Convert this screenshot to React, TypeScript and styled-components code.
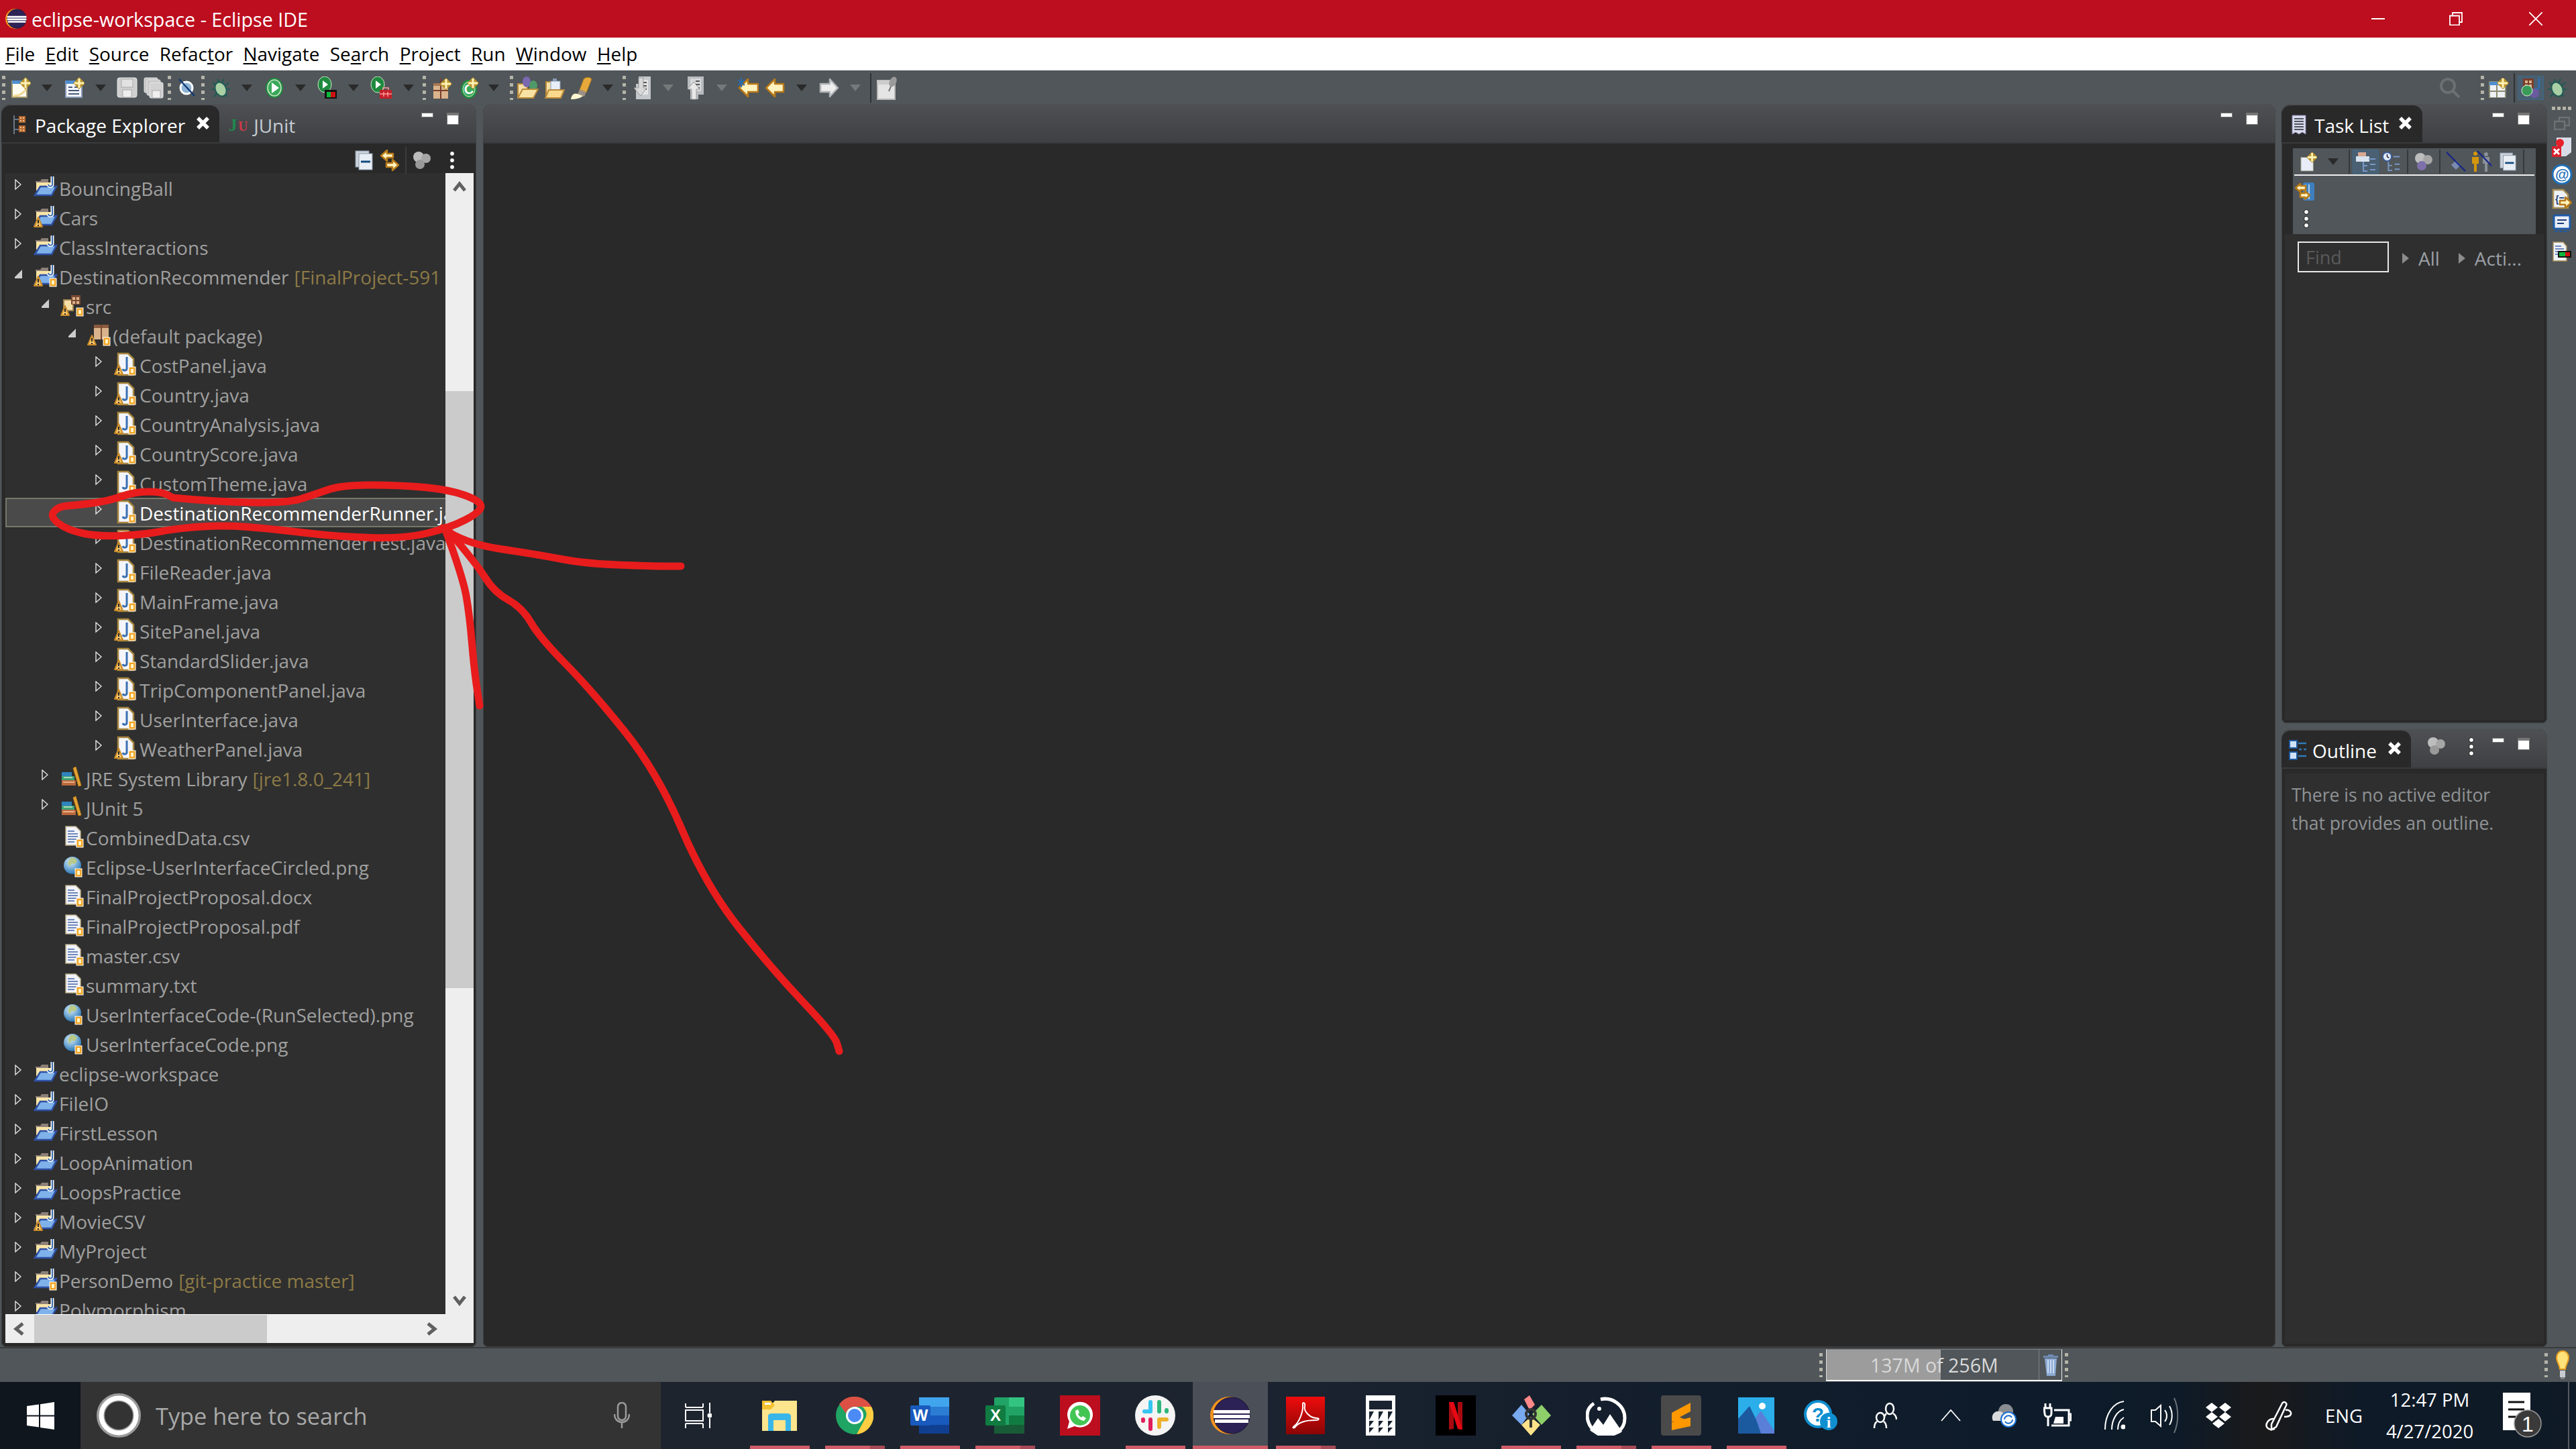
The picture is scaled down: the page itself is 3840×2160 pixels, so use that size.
import React from "react";
import styled, { createGlobalStyle } from "styled-components";

const Global = createGlobalStyle`
  html, body { margin: 0; padding: 0; background: #505659; }
  #root { width: 3840px; height: 2160px; }
  * { box-sizing: border-box; }
`;

const FONT = `"Open Sans", "Noto Sans", "Liberation Sans", sans-serif`;

const App0 = styled.div`
  position: relative; width: 3840px; height: 2160px; overflow: hidden;
  display: flex; flex-direction: column; background: #505659;
  font-family: ${FONT}; font-size: 28px;
`;
const TitleBar = styled.div`
  height: 56px; background: #bc0e1e; color: #fff; display: flex; align-items: center;
  padding-left: 8px; font-size: 28.7px;
`;
const TitleText = styled.span`margin-left: 7px; white-space: nowrap;`;
const WinButtons = styled.div`margin-left: auto; display: flex; align-items: center;`;
const WinBtn = styled.span<{ $w: number }>`width: ${p => p.$w}px; display: flex; justify-content: center;`;
const MenuBar = styled.div`
  height: 49px; background: #fff; color: #000; display: flex; align-items: center;
  padding-left: 8px; gap: 15.5px; font-size: 27.9px; border-bottom: 1px solid #eee;
`;
const Mn = styled.u`text-underline-offset: 3px; text-decoration-thickness: 2px;`;
const ToolBar = styled.div`height: 50px; display: flex; align-items: center; padding-top: 2px; position: relative;`;
const ToolCell = styled.span<{ $ml: number; $w: number }>`
  margin-left: ${p => p.$ml}px; width: ${p => p.$w}px; flex: none;
  display: flex; align-items: center; justify-content: center;
`;
const Grip = styled.span`
  display: block; width: 5px; height: 36px; flex: none;
  background: repeating-linear-gradient(180deg, #b4b4a8 0 5px, transparent 5px 11px);
`;
const Arrow = styled.span<{ $dim?: boolean }>`
  display: block; width: 0; height: 0;
  border-left: 8.5px solid transparent; border-right: 8.5px solid transparent;
  border-top: 10px solid ${p => (p.$dim ? "#75797c" : "#2a2a2a")};
`;
const VSep = styled.span`display: block; width: 2px; height: 44px; background: #2f3234;`;
const ToolRight = styled.div`margin-left: auto; display: flex; align-items: center; height: 100%;`;
const PerspBox = styled.span`
  width: 39px; height: 36px; background: #4a5f70; border: 1px solid #3b6a8c;
  display: flex; align-items: center; justify-content: center; margin-left: 4px;
`;
const Main = styled.div`height: 1853px; display: flex; padding-left: 2px;`;
const Panel = styled.div<{ $w: number; $h?: number }>`
  width: ${p => p.$w}px; flex: none; height: ${p => (p.$h ? `${p.$h}px` : "100%")}; display: flex; flex-direction: column;
  border-radius: 14px 14px 8px 8px; overflow: hidden; background: #292929;
  box-shadow: inset 0 0 0 1px #3d3f41;
`;
const Gutter = styled.div<{ $w: number }>`width: ${p => p.$w}px; flex: none;`;
const RightCol = styled.div`width: 396px; flex: none; display: flex; flex-direction: column; gap: 9px;`;
const TabRow = styled.div`
  height: 59px; flex: none; display: flex; padding-right: 26px;
  background: linear-gradient(180deg, #4e5053, #3f4043); border-bottom: 2px solid #383a3c;
`;
const Tab = styled.div<{ $active?: boolean; $pl: number; $pr: number }>`
  display: flex; align-items: center; margin-top: 2px; padding: 5px ${p => p.$pr}px 0 ${p => p.$pl}px;
  white-space: nowrap; border-radius: 14px 14px 0 0;
  background: ${p => (p.$active ? "#292929" : "transparent")};
  color: ${p => (p.$active ? "#fff" : "#c4ccd4")};
`;
const TabIcon = styled.span<{ $w: number }>`width: ${p => p.$w}px; margin-right: 7px; display: flex; flex: none; margin-top: -2px;`;
const TabClose = styled.span<{ $ml: number }>`margin-left: ${p => p.$ml}px; display: flex; margin-top: -8px;`;
const Controls = styled.div`margin-left: auto; display: flex; align-items: flex-start; gap: 20px; padding-top: 13px;`;
const MinBtn = styled.span`display: block; width: 18px; height: 7px; background: #fff; border: 1px solid #777;`;
const MaxBtn = styled.span`display: block; width: 18px; height: 18px; background: #fff; border: 1px solid #777; border-top-width: 3px; box-shadow: inset 0 1px 0 #777;`;
const ExtraCtl = styled.span<{ $mr: number }>`display: flex; margin-right: ${p => p.$mr}px; margin-top: -2px;`;

const ViewBar = styled.div`height: 44px; flex: none; display: flex; align-items: center; position: relative; padding-top: 6px;`;
const ViewCell = styled.span<{ $ml: number }>`margin-left: ${p => p.$ml}px; display: flex; align-items: center;`;
const TreeGrid = styled.div`
  flex: 1; min-height: 0; margin: 0 4px 5px 6px; display: grid;
  grid-template-columns: 656px 42px; grid-template-rows: 1701px 43px;
`;
const Tree = styled.div`background: #2f2f2f; overflow: hidden; display: flex; flex-direction: column;`;
const Row = styled.div<{ $depth: number; $sel?: boolean }>`
  height: 44px; flex: none; display: flex; align-items: center; white-space: nowrap;
  padding-left: ${p => 14 + p.$depth * 40}px;
  color: ${p => (p.$sel ? "#fff" : "#a0a0a0")};
  background: ${p => (p.$sel ? "#4a4a4a" : "transparent")};
  box-shadow: ${p => (p.$sel ? "inset 0 2px 0 #77776a, inset 0 -2px 0 #77776a, inset 2px 0 0 #77776a" : "none")};
`;
const Twisty = styled.span`width: 28px; flex: none; display: flex; margin-top: -8px;`;
const RowIcon = styled.span`width: 38px; height: 38px; flex: none; display: flex;`;
const RowText = styled.span`margin-top: 1px;`;
const Deco = styled.span`color: #8c7a46; margin-left: 8px;`;
const VScroll = styled.div`background: #eee; display: flex; flex-direction: column; align-items: center;`;
const HScroll = styled.div`background: #eee; display: flex; align-items: center; border-top: 1px solid #fff;`;
const Corner = styled.div`background: #eee;`;
const ScrollBtn = styled.span`width: 42px; height: 42px; flex: none; display: flex; align-items: center; justify-content: center;`;
const VThumb = styled.div`width: 100%; height: 890px; margin-top: 283px; background: #cbcbcb; margin-bottom: auto;`;
const HThumb = styled.div`width: 347px; height: 100%; background: #cbcbcb; margin-left: 1px; margin-right: auto;`;

const EditorBody = styled.div`flex: 1;`;
const TaskTools = styled.div`
  margin: 7px 0 0 17px; width: 362px; height: 128px; background: #505659; flex: none;
  display: flex; flex-direction: column;
`;
const TaskRow1 = styled.div`
  height: 41px; margin: 0 2px; border-bottom: 2px solid #f0f0f0; display: flex; align-items: center;
`;
const TaskRow2 = styled.div`display: flex; flex-direction: column; padding: 9px 0 0 3px; gap: 10px;`;
const SelectedTool = styled.span`
  width: 39px; height: 36px; margin-left: 4px; background: #4a6072; border: 1px solid #3b6a8c;
  display: flex; align-items: center; justify-content: center;
`;
const ThinSep = styled.span<{ $ml: number }>`display: block; width: 2px; height: 36px; background: #36393b; margin-left: ${p => p.$ml}px;`;
const DotsWrap = styled.span`display: flex; margin-left: 12px;`;
const Content = styled.div<{ $mt?: number }>`flex: 1; margin: ${p => p.$mt ?? 0}px 5px 5px; background: #2f2f2f;`;
const FindRow = styled.div`display: flex; align-items: center; padding: 11px 0 0 19px;`;
const FindBox = styled.div`
  width: 136px; height: 46px; border: 2px solid #e8e8e8; color: #5a5a5a; padding-left: 10px;
  display: flex; align-items: center; font-size: 27px;
`;
const FindLink = styled.span<{ $ml: number }>`margin-left: ${p => p.$ml}px; color: #9ba0a6; font-size: 28px; display: flex; align-items: center; gap: 14px; margin-top: 3px;`;
const Message = styled.div`padding: 11px 0 0 10px; color: #8f9396; font-size: 26.5px; line-height: 42px;`;

const Trim = styled.div`width: 43px; flex: none; display: flex; flex-direction: column; align-items: center; padding-top: 4px;`;
const TrimIcon = styled.span<{ $mt: number }>`display: flex; margin-top: ${p => p.$mt}px;`;
const TrimGrip = styled.span`
  display: block; width: 30px; height: 5px;
  background: repeating-linear-gradient(90deg, #b4b4a8 0 5px, transparent 5px 8px);
`;

const StatusBar = styled.div`height: 52px; display: flex; align-items: center; position: relative; border-top: 2px solid #3a3a3a;`;
const Heap = styled.div`
  width: 352px; height: 48px; margin-left: 5px; display: flex; position: relative;
  border: 1px solid #7b8083; border-bottom: 2px solid #fff; border-left-color: #ddd; border-right-color: #eee;
  color: #d9d9d9; font-size: 28.5px;
`;
const HeapFill = styled.div`width: 170px; background: #9c9c9c; flex: none;`;
const HeapText = styled.span`position: absolute; left: 65px; top: 50%; transform: translateY(-50%); white-space: nowrap;`;
const HeapTrash = styled.span`
  margin-left: auto; width: 34px; border-left: 1px solid #7b8083; display: flex; align-items: center; justify-content: center;
`;

const Taskbar = styled.div`
  height: 100px; flex: none; display: flex; align-items: stretch; color: #fff;
  background: linear-gradient(90deg, #1e252e 0, #1e242e 1000px, #1c2430 1800px, #141e2c 2400px, #0d1b2a 3100px, #0e1a27 3250px, #1a1a1b 3375px, #0e1a28 3520px, #0f1a26 100%);
`;
const StartBtn = styled.div`width: 120px; background: #0f161d; display: flex; align-items: center; justify-content: center;`;
const SearchBox = styled.div`width: 865px; background: #333; display: flex; align-items: center; padding-left: 24px; position: relative;`;
const SearchText = styled.span`margin-left: 22px; color: #a8a8a8; font-size: 34.300px; white-space: nowrap;`;
const Mic = styled.span`margin-left: auto; margin-right: 46px; display: flex;`;
const TaskView = styled.div`width: 121px; display: flex; align-items: center; justify-content: center; padding-right: 10px;`;
const TaskItem = styled.div<{ $active?: boolean }>`
  width: 112px; flex: none; position: relative; display: flex; align-items: center; justify-content: center;
  background: ${p => (p.$active ? "#4a4f58" : "transparent")};
`;
const Underline = styled.span<{ $full?: boolean; $split?: boolean }>`
  position: absolute; bottom: 0; height: 5px;
  left: ${p => (p.$full ? 0 : 12)}px; right: ${p => (p.$full ? 0 : 11)}px;
  background: ${p => (p.$split ? "linear-gradient(90deg, #cf5c66 0 67px, #a64a55 67px)" : "#cf5c66")};
`;
const TrayItem = styled.div<{ $w: number }>`
  width: ${p => p.$w}px; flex: none; display: flex; align-items: center; justify-content: center; font-size: 27.5px;
`;
const Clock = styled.div`
  width: 148px; flex: none; display: flex; flex-direction: column; align-items: center; justify-content: center;
  gap: 11px; font-size: 27.5px; line-height: 36px; white-space: nowrap;
`;
const Edge = styled.div`width: 2px; margin-left: 4px; background: #555a60;`;
const Annotation = styled.svg`position: absolute; left: 0; top: 0; pointer-events: none;`;

/* ---------- small drawings ---------- */
const Ic = ({ w = 36, h = 36, children }: { w?: number; h?: number; children: React.ReactNode }) => (
  <svg width={w} height={h} viewBox={`0 0 ${w} ${h}`}>{children}</svg>
);
const Sparkle = ({ x, y }: { x: number; y: number }) => (
  <g transform={`translate(${x} ${y})`}>
    <path d="M0-9 9 0 0 9-9 0Z" fill="#b8932a" />
    <path d="M0-7V7M-7 0H7" stroke="#fff2b8" strokeWidth="3" />
  </g>
);
const Warn = () => (
  <g>
    <path d="M7 19 13 33H1Z" fill="#f7c568" stroke="#c98a28" strokeWidth="2" strokeLinejoin="round" />
    <path d="M7 23v5M7 30v2" stroke="#2b2b2b" strokeWidth="2" />
  </g>
);
const Lock = ({ x = 24 }: { x?: number }) => (
  <g transform={`translate(${x} 22)`}>
    <rect x="0" y="0" width="10" height="12" fill="#f2a525" stroke="#fff" strokeWidth="1" />
    <rect x="3" y="3" width="4" height="6" fill="#fff4c8" />
  </g>
);
const ProjectIc = ({ warn, lock }: { warn?: boolean; lock?: boolean }) => (
  <Ic>
    <path d="M3 9h7l2-3h10v5H3z" fill="#8d8078" />
    <path d="M4 11h24v12H4z" fill="#fbe5a6" />
    <path d="M2 30 10 17h24l-7 13z" fill="#7fb2ea" stroke="#2f51a6" strokeWidth="2.5" />
    <path d="M28 2v12c0 3-5 4-6 0" fill="none" stroke="#fff" strokeWidth="5" />
    <path d="M28 2v12c0 3-5 4-6 0" fill="none" stroke="#3d6fae" strokeWidth="2" />
    {warn && <Warn />}
    {lock && <Lock />}
  </Ic>
);
const SrcIc = () => (
  <Ic>
    <path d="M5 10h14v16H5z" fill="#f5dfa6" stroke="#a08450" strokeWidth="2" />
    <path d="M16 3h14v14H16z" fill="#7a4a32" />
    <path d="M18 6h4v4h-4zM24 6h4v4h-4zM18 12h4v4h-4zM24 12h4v4h-4z" fill="#d9b48c" />
    <Warn /><Lock />
  </Ic>
);
const PkgIc = () => (
  <Ic>
    <path d="M10 3h22v22H10z" fill="#d9b48c" />
    <path d="M10 3h22v5H10z" fill="#8a5a3c" />
    <path d="M20 3h2v22h-2z" fill="#7a4a32" />
    <Warn /><Lock />
  </Ic>
);
const JavaIc = ({ warn }: { warn?: boolean }) => (
  <Ic>
    <path d="M6 2h15l8 8v24H6z" fill="#f3f5fb" stroke="#a8873f" strokeWidth="2.5" />
    <path d="M19 7v17c0 4-5 4-6 1" fill="none" stroke="#3a6fb0" strokeWidth="3" />
    {warn && <Warn />}
    <Lock x={22} />
  </Ic>
);
const LibIc = () => (
  <Ic>
    <path d="M2 10h15v6H2z" fill="#2e83bd" />
    <path d="M2 16h19v6H2z" fill="#3fa377" />
    <path d="M5 18h13" stroke="#a8d8bc" strokeWidth="2" />
    <path d="M2 22h21v8H2z" fill="#b9683c" />
    <path d="M4 25h17" stroke="#e9b08a" strokeWidth="2" />
    <path d="M19 4 23 2 31 30 27 31z" fill="#e4a334" stroke="#b87a18" strokeWidth="1" />
  </Ic>
);
const TextIc = () => (
  <Ic>
    <path d="M8 3h15l7 7v21H8z" fill="#f2f4fa" stroke="#bcae8a" strokeWidth="1.5" />
    <path d="M11 10h10M11 14h15M11 18h15M11 22h13M11 26h10" stroke="#6f88bc" strokeWidth="2" />
    <Lock x={24} />
  </Ic>
);
const GlobeIc = () => (
  <Ic>
    <defs>
      <radialGradient id="gb" cx="40%" cy="30%" r="75%"><stop offset="0" stopColor="#d9efff" /><stop offset="1" stopColor="#1f6fb0" /></radialGradient>
    </defs>
    <circle cx="18" cy="17" r="13" fill="url(#gb)" />
    <path d="M15 6c5-1 9 1 10 5l-4 4-4-1-3 5-3-6z" fill="#b8c98a" />
    <Lock x={22} />
  </Ic>
);
const TwistOpen = () => <svg width="14" height="18" viewBox="0 0 14 18"><path d="M13 3V16H0Z" fill="#ccc" transform="translate(-2 0)" /></svg>;
const TwistClosed = () => <svg width="10" height="18" viewBox="0 0 10 18"><path d="M1 1 9 8 1 15Z" fill="none" stroke="#e4e4e4" strokeWidth="1.4" /></svg>;
const CloseX = () => <svg width="19" height="19" viewBox="0 0 19 19"><path d="M2 2 17 17M17 2 2 17" stroke="#fff" strokeWidth="5.5" /></svg>;
const Dots = () => (
  <svg width="10" height="30" viewBox="0 0 10 30">
    {[5, 15, 25].map(y => <circle key={y} cx="5" cy={y} r="3.5" fill="#fff" stroke="#111" />)}
  </svg>
);
const FilterIc = ({ purple }: { purple?: boolean }) => (
  <Ic w={28} h={28}>
    <circle cx="9" cy="9" r="8" fill="#bdbdbd" /><circle cx="20" cy="11" r="7" fill="#a6a6a6" />
    <circle cx="11" cy="20" r="7" fill={purple ? "#7e70aa" : "#999"} />
  </Ic>
);
const CollapseIc = () => (
  <Ic w={28} h={30}>
    <rect x="1" y="1" width="20" height="24" fill="#cdd3dc" stroke="#8a97a8" />
    <rect x="6" y="5" width="20" height="24" fill="#e9eef5" stroke="#8a97a8" />
    <path d="M9 17h14" stroke="#124a80" strokeWidth="3" />
  </Ic>
);
const YArrow = ({ d, c = "#fff3c0", s = "#b87a18" }: { d: string; c?: string; s?: string }) => (
  <path d={d} fill={c} stroke={s} strokeWidth="2.5" strokeLinejoin="round" />
);

const toolIcons: Record<string, React.ReactNode> = {
  newfile: <Ic w={30} h={32}><path d="M2 6h22v24H2z" fill="#fdfbf0" stroke="#a89868" strokeWidth="2" /><path d="M2 5h20v5H2z" fill="#4f8fd0" /><path d="M4 28c10 0 18-6 20-14" fill="none" stroke="#f0d890" strokeWidth="3" /><Sparkle x={22} y={9} /></Ic>,
  newjava: <Ic w={30} h={32}><path d="M2 6h24v24H2z" fill="#f2f5fa" stroke="#8a9ab8" strokeWidth="2" /><path d="M2 5h20v5H2z" fill="#4f8fd0" /><path d="M6 15h6M6 20h16M6 25h16M15 15h9" stroke="#4a5a78" strokeWidth="2" /><Sparkle x={22} y={9} /></Ic>,
  save: <Ic w={32} h={32}><rect x="1" y="1" width="29" height="29" rx="3" fill="#cfcfcf" stroke="#e6e6e6" /><rect x="7" y="3" width="17" height="12" fill="#e2e2e2" stroke="#aaa" /><rect x="9" y="19" width="13" height="11" fill="#efefef" stroke="#aaa" /></Ic>,
  saveall: <Ic w={30} h={32}><rect x="1" y="1" width="20" height="22" rx="2" fill="#c8c8c8" stroke="#e6e6e6" /><rect x="5" y="4" width="20" height="23" rx="2" fill="#c8c8c8" stroke="#e6e6e6" /><rect x="9" y="8" width="20" height="23" rx="2" fill="#d2d2d2" stroke="#e6e6e6" /><rect x="13" y="20" width="12" height="11" fill="#efefef" stroke="#aaa" /></Ic>,
  skip: <Ic w={26} h={30}><circle cx="13" cy="15" r="9" fill="#8fb4d4" stroke="#fff" strokeWidth="3" /><path d="M2 2 25 27" stroke="#123a78" strokeWidth="2.5" /></Ic>,
  bug: <Ic w={30} h={32}><path d="M3 8 9 13M1 18h7M5 29l6-7M27 8l-6 5M29 18h-7M25 29l-6-7M10 3l4 6M20 3l-4 6" stroke="#1f5a55" strokeWidth="2.2" /><ellipse cx="15" cy="18" rx="8" ry="11" fill="#a9cfa5" stroke="#1f5a55" strokeWidth="2" transform="rotate(-25 15 18)" /></Ic>,
  run: <Ic w={28} h={32}><ellipse cx="14" cy="16" rx="13" ry="15" fill="#1f8a3f" /><ellipse cx="14" cy="16" rx="10" ry="12" fill="#3aa85a" stroke="#cfe8c8" strokeWidth="1.5" /><path d="M10 8 21 16 10 24Z" fill="#fff" /></Ic>,
  cov: <Ic w={30} h={34}><ellipse cx="11" cy="12" rx="10" ry="12" fill="#1f8a3f" stroke="#cfe8c8" /><path d="M8 6 16 12 8 18Z" fill="#fff" /><rect x="11" y="20" width="18" height="13" fill="#111" /><rect x="14" y="23" width="6" height="8" fill="#0bb83a" /><rect x="20" y="23" width="7" height="8" fill="#d01010" /></Ic>,
  ext: <Ic w={34} h={34}><ellipse cx="11" cy="12" rx="10" ry="12" fill="#1f8a3f" stroke="#cfe8c8" /><path d="M8 6 16 12 8 18Z" fill="#fff" /><path d="M14 20h18v13H14z" fill="#c4202a" /><path d="M19 20v-3h8v3M14 26h18M20 23v7M26 23v7" stroke="#ff9a9a" strokeWidth="1.5" fill="none" /></Ic>,
  newpkg: <Ic w={30} h={32}><path d="M1 9h22v23H1z" fill="#d9b48c" /><path d="M1 20h22M12 2v30" stroke="#7a3e2c" strokeWidth="2" /><path d="M1 9h22v4H1z" fill="#a87850" /><Sparkle x={20} y={10} /></Ic>,
  newclass: <Ic w={28} h={34}><ellipse cx="13" cy="19" rx="12" ry="14" fill="#1f8a3f" /><ellipse cx="13" cy="19" rx="9" ry="11" fill="#39a85a" stroke="#dff0d8" /><text x="13" y="26" fontSize="20" fontWeight="700" fill="#fff" textAnchor="middle" fontFamily="Liberation Sans">C</text><Sparkle x={19} y={10} /></Ic>,
  opentype: <Ic w={32} h={34}><path d="M1 11h14v20H1z" fill="#f5dfa6" stroke="#b88a3a" strokeWidth="2" /><ellipse cx="14" cy="8" rx="6" ry="8" fill="#7a68b0" /><ellipse cx="24" cy="14" rx="6" ry="8" fill="#4f9a68" /><path d="M1 32 8 19h23l-7 13z" fill="#f9e3a4" stroke="#b88a3a" strokeWidth="2" /></Ic>,
  openfile: <Ic w={30} h={34}><path d="M2 8h16v24H2z" fill="#f5dfa6" stroke="#b88a3a" strokeWidth="2" /><path d="M12 3h6v4h-6z" fill="#8a9ab8" /><rect x="9" y="7" width="14" height="18" fill="#e8eef8" stroke="#8a9ab8" /><path d="M1 32 6 20h23l-5 12z" fill="#f9d98c" stroke="#b88a3a" strokeWidth="2" /></Ic>,
  brush: <Ic w={34} h={36}><path d="M20 5c4-4 10-3 12 0l-8 20-10-4z" fill="#e8a93c" stroke="#a87818" /><path d="M14 20l10 4-3 7-10-3z" fill="#9c9084" /><path d="M1 35c1-7 5-10 10-8l8 3c-3 3-10 5-18 5z" fill="#fff8d0" /></Ic>,
  nextann: <Ic w={26} h={36}><path d="M8 1h18v34H4V12h4z" fill="#c4c8cc" /><path d="M11 6h11v22H11z" fill="#e4e4e4" /><path d="M14 10h6M14 15h6M14 20h6" stroke="#555" strokeWidth="2" /><path d="M8 3h7v15h5L11 30 1 18h7z" fill="#d8d8d8" stroke="#999" /></Ic>,
  prevann: <Ic w={27} h={36}><path d="M2 1h24v27H18v7H6V20H2z" fill="#b8bcc0" /><path d="M6 4h16v19H6z" fill="#d6d8da" /><path d="M14 8h6M14 13h6M14 18h6" stroke="#555" strokeWidth="2" /><path d="M8 35V20H2L11 9l9 11h-5v15z" fill="#e8e8e8" stroke="#999" /></Ic>,
  lastedit: <Ic w={31} h={32}><path d="M30 10H15V3L2 16l13 13v-7h15z" fill="#fff3c0" stroke="#b87a18" strokeWidth="2.5" strokeLinejoin="round" /><path d="M5 1v14M0 4l10 8M10 4 0 12" stroke="#2a6ab0" strokeWidth="2" /></Ic>,
  back: <Ic w={30} h={32}><YArrow d="M28 10H15V3L2 16l13 13v-7h13z" /></Ic>,
  forward: <Ic w={30} h={32}><YArrow d="M2 10h14V3l12 13-12 13v-7H2z" c="#ededed" s="#b0b4b8" /></Ic>,
  pin: <Ic w={32} h={36}><path d="M1 7h26v28H1z" fill="#e4e4e4" stroke="#b8b8b8" strokeWidth="2" /><path d="M1 7h24v6H1z" fill="#cccccc" /><ellipse cx="24" cy="9" rx="5" ry="8" fill="#9a9a9a" transform="rotate(25 24 9)" /><path d="M21 16l-3 7" stroke="#777" strokeWidth="2" /></Ic>,
};

type Tool = [string, number, number];
const tools: Tool[] = [
  ["grip", 3, 8], ["newfile", 16, 46], ["drop", 61, 78], ["newjava", 96, 126], ["drop", 141, 158],
  ["save", 174, 206], ["saveall", 214, 244], ["grip", 250, 255], ["skip", 265, 291], ["grip", 300, 305],
  ["bug", 314, 344], ["drop", 359, 376], ["run", 395, 423], ["drop", 439, 456], ["cov", 473, 503],
  ["drop", 518, 535], ["ext", 552, 586], ["drop", 600, 617], ["grip", 630, 635], ["newpkg", 645, 675],
  ["newclass", 686, 714], ["drop", 727, 744], ["grip", 760, 765], ["opentype", 771, 803], ["openfile", 812, 842],
  ["brush", 850, 884], ["drop", 897, 914], ["grip", 928, 933], ["nextann", 944, 970], ["dim", 987, 1004],
  ["prevann", 1023, 1050], ["dim", 1067, 1084], ["lastedit", 1100, 1131], ["back", 1140, 1170], ["drop", 1186, 1203],
  ["forward", 1221, 1251], ["dim", 1266, 1283], ["sep", 1297, 1299], ["pin", 1307, 1339],
];

const renderTool = (k: string) =>
  k === "grip" ? <Grip /> : k === "drop" ? <Arrow /> : k === "dim" ? <Arrow $dim /> : k === "sep" ? <VSep /> : toolIcons[k];

/* ---------- tree data ---------- */
type Node = { d: number; t: string; deco?: string; ic: React.ReactNode; tw?: "o" | "c"; sel?: boolean };
const P = (t: string, warn = true, deco?: string): Node => ({ d: 0, t, deco, tw: "c", ic: <ProjectIc warn={warn} lock={!!deco} /> });
const J = (t: string, warn = true, sel = false): Node => ({ d: 3, t, tw: "c", sel, ic: <JavaIc warn={warn} /> });
const F = (t: string, ic: React.ReactNode): Node => ({ d: 1, t, ic });
const nodes: Node[] = [
  P("BouncingBall", false), P("Cars"), P("ClassInteractions", false),
  { d: 0, t: "DestinationRecommender", deco: "[FinalProject-591 master]", tw: "o", ic: <ProjectIc warn lock /> },
  { d: 1, t: "src", tw: "o", ic: <SrcIc /> },
  { d: 2, t: "(default package)", tw: "o", ic: <PkgIc /> },
  J("CostPanel.java"), J("Country.java"), J("CountryAnalysis.java"), J("CountryScore.java"),
  J("CustomTheme.java", false), J("DestinationRecommenderRunner.java", false, true),
  J("DestinationRecommenderTest.java"), J("FileReader.java", false), J("MainFrame.java"), J("SitePanel.java"),
  J("StandardSlider.java"), J("TripComponentPanel.java"), J("UserInterface.java", false), J("WeatherPanel.java"),
  { d: 1, t: "JRE System Library", deco: "[jre1.8.0_241]", tw: "c", ic: <LibIc /> },
  { d: 1, t: "JUnit 5", tw: "c", ic: <LibIc /> },
  F("CombinedData.csv", <TextIc />), F("Eclipse-UserInterfaceCircled.png", <GlobeIc />),
  F("FinalProjectProposal.docx", <TextIc />), F("FinalProjectProposal.pdf", <TextIc />),
  F("master.csv", <TextIc />), F("summary.txt", <TextIc />),
  F("UserInterfaceCode-(RunSelected).png", <GlobeIc />), F("UserInterfaceCode.png", <GlobeIc />),
  P("eclipse-workspace", false), P("FileIO", false), P("FirstLesson", false), P("LoopAnimation", false),
  P("LoopsPractice", false), P("MovieCSV"), P("MyProject", false), P("PersonDemo", false, "[git-practice master]"),
  P("Polymorphism", false),
];

const Chevron = ({ dir }: { dir: "u" | "d" | "l" | "r" }) => {
  const rot = { u: 0, r: 90, d: 180, l: 270 }[dir];
  return (
    <svg width="22" height="22" viewBox="0 0 22 22">
      <path d="M3 16 11 6l8 10" fill="none" stroke="#606060" strokeWidth="5" transform={`rotate(${rot} 11 11)`} />
    </svg>
  );
};

/* ---------- taskbar logos ---------- */
const EclipseLogo = ({ s = 60 }: { s?: number }) => (
  <svg width={s} height={s} viewBox="0 0 60 60">
    <circle cx="28" cy="30" r="28" fill="#f7941e" />
    <circle cx="32" cy="30" r="27" fill="#2c2255" stroke="#16122e" strokeWidth="1" />
    <path d="M5 22h54v5H5zM5 29h54v5H5zM7 36h50v5H7z" fill="#fff" />
  </svg>
);
const logos: Record<string, React.ReactNode> = {
  explorer: <Ic w={52} h={46}><path d="M0 6h15l4-5H52v45H0z" fill="#fde58d" /><path d="M0 1h13l6 7-6 6H0z" fill="#f5c232" /><rect x="4" y="4" width="9" height="3" fill="#fff" /><path d="M9 46V24c0-3 3-4 5-4h24c2 0 5 1 5 4v22h-8V30H17v16z" fill="#39b6e9" /></Ic>,
  chrome: <svg width="56" height="56" viewBox="0 0 56 56"><circle cx="28" cy="28" r="28" fill="#1fa463" /><path d="M28 0a28 28 0 0 1 25 15H28a13 13 0 0 0-13 10L5 11A28 28 0 0 1 28 0z" fill="#dd5044" /><path d="M53 15a28 28 0 0 1-22 41l12-22a13 13 0 0 0-4-19z" fill="#ffcd42" /><circle cx="28" cy="28" r="13" fill="#fff" /><circle cx="28" cy="28" r="10" fill="#4c8bf5" /></svg>,
  word: <Ic w={58} h={54}><rect x="13" y="0" width="45" height="54" rx="2" fill="#2b7cd3" /><path d="M13 0h45v14H13z" fill="#41a5ee" /><path d="M13 27h45v14H13z" fill="#185abd" /><path d="M13 41h45v13H13z" fill="#103f91" /><rect x="0" y="12" width="30" height="30" rx="2" fill="#185abd" /><text x="15" y="35" fontSize="24" fontWeight="700" fill="#fff" textAnchor="middle" fontFamily="Liberation Sans">W</text></Ic>,
  excel: <Ic w={58} h={54}><rect x="13" y="0" width="45" height="54" rx="2" fill="#21a366" /><path d="M35 0h23v14H35z" fill="#33c481" /><path d="M35 27h23v14H35z" fill="#107c41" /><path d="M13 41h45v13H13z" fill="#185c37" /><rect x="0" y="12" width="30" height="30" rx="2" fill="#107c41" /><text x="15" y="35" fontSize="24" fontWeight="700" fill="#fff" textAnchor="middle" fontFamily="Liberation Sans">X</text></Ic>,
  whatsapp: <Ic w={60} h={60}><rect width="60" height="60" fill="#bc0e1e" /><path d="M11 50l3-11a19 19 0 1 1 8 7z" fill="#fff" /><circle cx="30" cy="30" r="15" fill="#43c554" /><path d="M23 23c0 9 6 14 13 15l3-4-5-3-2 2c-2-1-4-3-5-5l2-2-2-5z" fill="#fff" /></Ic>,
  slack: <Ic w={60} h={60}><circle cx="30" cy="30" r="30" fill="#f4f4f4" /><path d="M23 10v12M14 24h9" stroke="#36c5f0" strokeWidth="6" strokeLinecap="round" /><path d="M36 10v14M47 22v2" stroke="#2eb67d" strokeWidth="6" strokeLinecap="round" /><path d="M36 47v-11M47 36h-11" stroke="#ecb22e" strokeWidth="6" strokeLinecap="round" /><path d="M23 50V36M12 36v2" stroke="#e01e5a" strokeWidth="6" strokeLinecap="round" /></Ic>,
  acrobat: <Ic w={58} h={56}><defs><linearGradient id="ac" x1="0" y1="0" x2="0" y2="1"><stop offset="0" stopColor="#ef0c0c" /><stop offset="1" stopColor="#8a0505" /></linearGradient></defs><rect width="58" height="56" fill="url(#ac)" /><path d="M12 44c8-6 14-22 13-32-1-4 4-4 3 2-2 8 8 18 18 18 4 0 4 3-2 3-10 0-24 2-30 10-3 3-5 1-2-1z" fill="none" stroke="#fff" strokeWidth="2" /></Ic>,
  calc: <Ic w={44} h={60}><rect width="44" height="60" fill="#fff" /><rect x="5" y="8" width="34" height="13" fill="#1a2430" /><path d="M5 38l7-13h-7zM19 38l7-13h-7zM33 38l7-13h-7zM5 48l7-9h-7zM19 48l7-9h-7zM33 48l7-9h-7zM5 57l7-8h-7zM19 57l7-8h-7zM33 57l7-8h-7z" fill="#1a2430" transform="translate(0 -1)" /></Ic>,
  netflix: <Ic w={60} h={60}><rect width="60" height="60" fill="#000" /><path d="M20 10h7v40l-7 1z" fill="#a80a0f" /><path d="M33 10h7v41l-7-1z" fill="#a80a0f" /><path d="M20 10h7l13 41-7-1z" fill="#e50914" /></Ic>,
  kraken: <Ic w={60} h={60}><path d="M30 6 38 0l8 14-8 8z" fill="#f88" transform="translate(-10 0)" /><path d="M2 30 16 14l12 14-12 16z" fill="#78aaf0" /><path d="M32 28l14-14 14 16-14 14z" fill="#8fcf6a" /><path d="M16 44l14-12 14 12-14 16z" fill="#fde28a" /><circle cx="30" cy="28" r="7" fill="none" stroke="#333" strokeWidth="4" /><path d="M30 34v14" stroke="#333" strokeWidth="4" /></Ic>,
  peaks: <Ic w={61} h={60}><path d="M22 6c16-4 36 8 36 28S40 60 28 60 2 46 2 30C2 22 6 16 12 12" fill="none" stroke="#fff" strokeWidth="5" /><path d="M6 52 18 34l8 10 10-16 18 26c-8 8-38 8-48-2z" fill="#fff" /><circle cx="20" cy="20" r="3" fill="#fff" /></Ic>,
  sublime: <Ic w={60} h={60}><rect width="60" height="60" rx="4" fill="#4a4a4a" /><path d="M16 26 44 11v13L16 39zM16 28l28 11v-0L16 39zM44 33v13L16 52V40z" fill="#ff9800" /></Ic>,
  photos: <Ic w={54} h={54}><rect width="54" height="54" fill="#2baeea" /><path d="M0 54V32L17 13l20 41z" fill="#1c5aa0" /><path d="M26 30l8-10 20 30v4H34z" fill="#5a7fd8" /><ellipse cx="36" cy="13" rx="5" ry="5" fill="#fff" /></Ic>,
};

const Smooth = ({ pts }: { pts: number[][] }) => {
  let d = `M${pts[0][0]} ${pts[0][1]}`;
  for (let i = 1; i < pts.length - 1; i++) {
    const mx = (pts[i][0] + pts[i + 1][0]) / 2;
    const my = (pts[i][1] + pts[i + 1][1]) / 2;
    d += ` Q${pts[i][0]} ${pts[i][1]} ${mx} ${my}`;
  }
  const l = pts[pts.length - 1];
  d += ` L${l[0]} ${l[1]}`;
  return <path d={d} fill="none" stroke="#e81c1c" strokeWidth="11" strokeLinecap="round" strokeLinejoin="round" />;
};

const taskItems: [string, number][] = [
  ["explorer", 1], ["chrome", 2], ["word", 1], ["excel", 2], ["whatsapp", 0], ["slack", 1], ["eclipse", 3],
  ["acrobat", 2], ["calc", 0], ["netflix", 0], ["kraken", 1], ["peaks", 2], ["sublime", 1], ["photos", 1],
];

const WinLogo = () => (
  <svg width="41" height="41" viewBox="0 0 41 41">
    <path d="M0 6 18 3.500V19.500H0zM20 3.200 41 0V19.500H20zM0 21.500H18V37.500L0 35zM20 21.500H41V41L20 38z" fill="#fff" />
  </svg>
);

export default function App() {
  let prevEnd = 0;
  return (
    <App0>
      <Global />
      <TitleBar>
        <EclipseLogo s={32} />
        <TitleText>eclipse-workspace - Eclipse IDE</TitleText>
        <WinButtons>
          <WinBtn $w={116}><svg width="20" height="3"><rect width="20" height="2" fill="#fff" /></svg></WinBtn>
          <WinBtn $w={116}><svg width="20" height="20" viewBox="0 0 20 20"><path d="M1 5.500h14v14H1zM5 5V1h14v14h-4" fill="none" stroke="#fff" strokeWidth="1.800" /></svg></WinBtn>
          <WinBtn $w={121}><svg width="20" height="20" viewBox="0 0 20 20"><path d="M0 0 20 20M20 0 0 20" stroke="#fff" strokeWidth="1.800" /></svg></WinBtn>
        </WinButtons>
      </TitleBar>
      <MenuBar>
        <span><Mn>F</Mn>ile</span>
        <span><Mn>E</Mn>dit</span>
        <span><Mn>S</Mn>ource</span>
        <span>Refac<Mn>t</Mn>or</span>
        <span><Mn>N</Mn>avigate</span>
        <span>Se<Mn>a</Mn>rch</span>
        <span><Mn>P</Mn>roject</span>
        <span><Mn>R</Mn>un</span>
        <span><Mn>W</Mn>indow</span>
        <span><Mn>H</Mn>elp</span>
      </MenuBar>
      <ToolBar>
        {tools.map(([k, a, b], i) => {
          const ml = a - prevEnd;
          prevEnd = b;
          return <ToolCell key={i} $ml={ml} $w={b - a}>{renderTool(k)}</ToolCell>;
        })}
        <ToolRight>
          <svg width="32" height="32" viewBox="0 0 32 32"><circle cx="13" cy="13" r="10" fill="none" stroke="#6c7073" strokeWidth="4" /><path d="M20 20 30 30" stroke="#6c7073" strokeWidth="4" /></svg>
          <ToolCell $ml={30} $w={5}><Grip /></ToolCell>
          <ToolCell $ml={7} $w={30}><Ic w={30} h={30}><path d="M1 6h24v24H1z" fill="#eef2f6" stroke="#8a8a70" strokeWidth="2" /><path d="M1 6h22v5H1z" fill="#4f8fd0" /><path d="M12 11v18M1 20h24" stroke="#8a8a70" strokeWidth="2" /><Sparkle x={21} y={8} /></Ic></ToolCell>
          <ToolCell $ml={7} $w={2}><VSep /></ToolCell>
          <PerspBox>
            <Ic w={32} h={32}><path d="M4 2h16v16H4z" fill="#7a3e2c" /><path d="M7 5h4v4H7zM13 5h4v4h-4zM7 11h4v4H7zM13 11h4v4h-4z" fill="#d9b48c" /><path d="M28 2v12c0 3-4 4-6 4" fill="none" stroke="#2f6fae" strokeWidth="3" /><circle cx="21" cy="24" r="7" fill="#6a5aa0" /><circle cx="10" cy="20" r="8" fill="#3a9a58" stroke="#dff0d8" /></Ic>
          </PerspBox>
          <ToolCell $ml={5} $w={30}>{toolIcons.bug}</ToolCell>
          <ToolCell $ml={13} $w={0}><span /></ToolCell>
        </ToolRight>
      </ToolBar>
      <Main>
        <Panel $w={708}>
          <TabRow>
            <Tab $active $pl={18} $pr={15}>
              <TabIcon $w={25}>
                <svg width="20" height="28" viewBox="0 0 20 28"><path d="M1 0v28M1 6h7M1 21h7" stroke="#6a7684" strokeWidth="2" /><path d="M8 1h10v10H8zM8 15h10v10H8z" fill="#b86a30" /><path d="M10 3h2v2h-2zM14 3h2v2h-2zM10 7h2v2h-2zM14 7h2v2h-2zM10 17h2v2h-2zM14 17h2v2h-2zM10 21h2v2h-2zM14 21h2v2h-2z" fill="#eac49a" /></svg>
              </TabIcon>
              <span>Package Explorer</span>
              <TabClose $ml={17}><CloseX /></TabClose>
            </Tab>
            <Tab $pl={14} $pr={0}>
              <TabIcon $w={30}>
                <svg width="30" height="24" viewBox="0 0 30 24"><text x="0" y="21" fontSize="25" fontWeight="700" fontFamily="Liberation Serif" fill="#1f8a4f">J</text><text x="14" y="21" fontSize="20" fontWeight="700" fontFamily="Liberation Serif" fill="#cf3a48">U</text></svg>
              </TabIcon>
              <span>JUnit</span>
            </Tab>
            <Controls><MinBtn /><MaxBtn /></Controls>
          </TabRow>
          <ViewBar>
            <ViewCell $ml={527}><CollapseIc /></ViewCell>
            <ViewCell $ml={9}>
              <Ic w={30} h={34}><YArrow d="M2 10 11 2v5h9v6h-9v5z" /><YArrow d="M28 24l-9-8v5h-9v6h9v5z" /></Ic>
            </ViewCell>
            <ViewCell $ml={8}><svg width="2" height="40"><rect width="2" height="40" fill="#3c3c3c" /></svg></ViewCell>
            <ViewCell $ml={9}><FilterIc /></ViewCell>
            <ViewCell $ml={26}><Dots /></ViewCell>
          </ViewBar>
          <TreeGrid>
            <Tree>
              {nodes.map((n, i) => (
                <Row key={i} $depth={n.d} $sel={n.sel}>
                  <Twisty>{n.tw === "o" ? <TwistOpen /> : n.tw === "c" ? <TwistClosed /> : null}</Twisty>
                  <RowIcon>{n.ic}</RowIcon>
                  <RowText>{n.t}{n.deco && <Deco>{n.deco}</Deco>}</RowText>
                </Row>
              ))}
            </Tree>
            <VScroll>
              <ScrollBtn><Chevron dir="u" /></ScrollBtn>
              <VThumb />
              <ScrollBtn><Chevron dir="d" /></ScrollBtn>
            </VScroll>
            <HScroll>
              <ScrollBtn><Chevron dir="l" /></ScrollBtn>
              <HThumb />
              <ScrollBtn><Chevron dir="r" /></ScrollBtn>
            </HScroll>
            <Corner />
          </TreeGrid>
        </Panel>
        <Gutter $w={10} />
        <Panel $w={2672}>
          <TabRow>
            <Controls><MinBtn /><MaxBtn /></Controls>
          </TabRow>
          <EditorBody />
        </Panel>
        <Gutter $w={9} />
        <RightCol>
          <Panel $w={396} $h={923}>
            <TabRow>
              <Tab $active $pl={15} $pr={16}>
                <TabIcon $w={27}>
                  <svg width="22" height="30" viewBox="0 0 22 30"><path d="M1 1h20v28l-5-3-5 3-5-3-5 3z" fill="#d8dcec" stroke="#8a84b0" /><path d="M4 6h14M4 10h14M4 14h14M4 18h14M4 22h14" stroke="#50525e" strokeWidth="2" /></svg>
                </TabIcon>
                <span>Task List</span>
                <TabClose $ml={15}><CloseX /></TabClose>
              </Tab>
              <Controls><MinBtn /><MaxBtn /></Controls>
            </TabRow>
            <TaskTools>
              <TaskRow1>
                <ToolCell $ml={8} $w={26}><Ic w={28} h={30}><path d="M2 8h20v22H2z" fill="#e8edf8" stroke="#8a8a70" /><Sparkle x={20} y={8} /></Ic></ToolCell>
                <ToolCell $ml={15} $w={17}><Arrow /></ToolCell>
                <ThinSep $ml={15} />
                <SelectedTool>
                  <Ic w={32} h={32}><path d="M4 2h12v6H4z" fill="#d8a894" /><path d="M1 8h20v8H1z" fill="#d8e4f0" /><path d="M12 16v14h6M12 22h6M20 12h10M22 20h8M22 28h8" stroke="#7898c8" strokeWidth="2" fill="none" /></Ic>
                </SelectedTool>
                <ToolCell $ml={5} $w={28}><Ic w={30} h={32}><circle cx="8" cy="8" r="7" fill="#dfe8f6" stroke="#3a5a9a" strokeWidth="2" /><path d="M8 4v4l3 2" stroke="#223" strokeWidth="1.500" fill="none" /><path d="M10 16v14h6M10 22h6M18 8h10M20 20h8M20 28h8" stroke="#7898c8" strokeWidth="2" fill="none" /></Ic></ToolCell>
                <ThinSep $ml={9} />
                <ToolCell $ml={9} $w={28}><FilterIc purple /></ToolCell>
                <ThinSep $ml={9} />
                <ToolCell $ml={8} $w={30}><Ic w={30} h={30}><path d="M8 20l7-7 7 7-7 7z" fill="#7a8ab0" /><path d="M1 1 29 29" stroke="#12228a" strokeWidth="2" /></Ic></ToolCell>
                <ToolCell $ml={7} $w={32}><Ic w={32} h={32}><circle cx="7" cy="4" r="3" fill="#d4960c" /><path d="M2 9h10v10H9v12H5V19H2z" fill="#d4960c" /><circle cx="23" cy="5" r="3" fill="#8a9098" /><path d="M18 9h10v10h-3v12h-4V19h-3z" fill="#8a9098" /><path d="M10 0 31 22" stroke="#12228a" strokeWidth="2" /></Ic></ToolCell>
                <ToolCell $ml={11} $w={26}><CollapseIc /></ToolCell>
                <ThinSep $ml={9} />
              </TaskRow1>
              <TaskRow2>
                <Ic w={30} h={30}><rect x="12" y="1" width="17" height="27" rx="3" fill="#3f7fc0" /><path d="M16 4v22M21 4v22" stroke="#a8d0f0" strokeWidth="2" /><YArrow d="M1 9l7-6v3h8v6H8v3z" /><YArrow d="M22 20l-7-6v3H8v6h7v3z" /></Ic>
                <DotsWrap><Dots /></DotsWrap>
              </TaskRow2>
            </TaskTools>
            <Content>
              <FindRow>
                <FindBox>Find</FindBox>
                <FindLink $ml={20}>
                  <svg width="10" height="16" viewBox="0 0 10 16"><path d="M0 0 10 8 0 16Z" fill="#8c8c8c" /></svg>
                  All
                </FindLink>
                <FindLink $ml={28}>
                  <svg width="10" height="16" viewBox="0 0 10 16"><path d="M0 0 10 8 0 16Z" fill="#8c8c8c" /></svg>
                  Acti...
                </FindLink>
              </FindRow>
            </Content>
          </Panel>
          <Panel $w={396} $h={921}>
            <TabRow>
              <Tab $active $pl={11} $pr={15}>
                <TabIcon $w={28}>
                  <svg width="26" height="30" viewBox="0 0 26 30"><rect x="1" y="1" width="11" height="11" fill="#cfe2f8" stroke="#1e5a9e" strokeWidth="2" /><rect x="1" y="18" width="11" height="11" fill="#cfe2f8" stroke="#1e5a9e" strokeWidth="2" /><path d="M14 5h12M14 24h12M15 14h4M22 14h4" stroke="#2f7ab8" strokeWidth="2.500" /></svg>
                </TabIcon>
                <span>Outline</span>
                <TabClose $ml={17}><CloseX /></TabClose>
              </Tab>
              <Controls>
                <ExtraCtl $mr={13}><FilterIc /></ExtraCtl>
                <ExtraCtl $mr={6}><Dots /></ExtraCtl>
                <MinBtn /><MaxBtn />
              </Controls>
            </TabRow>
            <Content $mt={7}>
              <Message>There is no active editor<br />that provides an outline.</Message>
            </Content>
          </Panel>
        </RightCol>
        <Trim>
          <TrimGrip />
          <TrimIcon $mt={10}>
            <svg width="24" height="20" viewBox="0 0 24 20"><path d="M1 7h15v12H1zM8 7V1h15v12h-7" fill="none" stroke="#6e7275" strokeWidth="2.500" /></svg>
          </TrimIcon>
          <TrimIcon $mt={10}>
            <Ic w={32} h={32}><path d="M8 1h22v22l-8 6H8z" fill="#d8dce8" /><circle cx="13" cy="9" r="6" fill="#e8202a" /><rect x="1" y="14" width="14" height="16" fill="#d8202c" /><path d="M4 18l8 8M12 18l-8 8" stroke="#fff" strokeWidth="3" /></Ic>
          </TrimIcon>
          <TrimIcon $mt={9}>
            <svg width="30" height="30" viewBox="0 0 30 30"><ellipse cx="15" cy="15" rx="14" ry="14" fill="#fff" stroke="#1f6fb8" strokeWidth="3" /><text x="15" y="22" fontSize="21" fontWeight="700" fontStyle="italic" fill="#1f6fb8" textAnchor="middle" fontFamily="Liberation Sans">@</text></svg>
          </TrimIcon>
          <TrimIcon $mt={6}>
            <Ic w={30} h={32}><path d="M2 2h15l7 7v20H2z" fill="#eef2f8" stroke="#a89058" strokeWidth="2.500" /><text x="5" y="21" fontSize="14" fontWeight="700" fill="#1f3f7a" fontFamily="Liberation Sans">{"{="}</text><YArrow d="M12 18h8v-5l9 8-9 8v-5h-8z" /></Ic>
          </TrimIcon>
          <TrimIcon $mt={6}>
            <Ic w={28} h={28}><rect x="2" y="2" width="24" height="20" rx="2" fill="#e8eef8" stroke="#1e5aa8" strokeWidth="3" /><path d="M7 9h14M7 14h10" stroke="#1e3a78" strokeWidth="2" /><path d="M3 26h22" stroke="#1e5aa8" strokeWidth="2" strokeDasharray="5 2" /></Ic>
          </TrimIcon>
          <TrimIcon $mt={13}>
            <Ic w={30} h={30}><path d="M2 1h15l5 6v22H2z" fill="#eef2f8" stroke="#a89058" strokeWidth="1.500" /><path d="M5 7h9M5 11h13M5 15h13M5 19h10" stroke="#6f88bc" strokeWidth="2" /><rect x="9" y="14" width="20" height="10" fill="#111" /><rect x="11" y="16" width="9" height="6" fill="#0bb83a" /><rect x="20" y="16" width="7" height="6" fill="#d01010" /></Ic>
          </TrimIcon>
        </Trim>
      </Main>
      <StatusBar>
        <ToolCell $ml={2712} $w={5}><Grip /></ToolCell>
        <Heap>
          <HeapFill />
          <HeapText>137M of 256M</HeapText>
          <HeapTrash>
            <svg width="22" height="32" viewBox="0 0 22 32"><path d="M0 2h22v3H0zM7 0h8v2H7z" fill="#6f8bb5" /><path d="M2 6h18l-2 26H5z" fill="#8caad4" /><path d="M7 8v20M11 8v20M15 8v20" stroke="#c8daf2" strokeWidth="2" /></svg>
          </HeapTrash>
        </Heap>
        <ToolCell $ml={4} $w={5}><Grip /></ToolCell>
        <ToolCell $ml={710} $w={5}><Grip /></ToolCell>
        <ToolCell $ml={12} $w={20}>
          <svg width="20" height="44" viewBox="0 0 20 44"><path d="M10 1c5 0 9 4 9 10 0 6-4 9-5 17H6C5 20 1 17 1 11 1 5 5 1 10 1z" fill="#ffe27a" stroke="#e8a020" strokeWidth="2" /><rect x="6" y="30" width="8" height="10" fill="#c8ccd2" /><rect x="7" y="40" width="6" height="3" fill="#7a8088" /></svg>
        </ToolCell>
      </StatusBar>
      <Taskbar>
        <StartBtn><WinLogo /></StartBtn>
        <SearchBox>
          <svg width="66" height="66" viewBox="0 0 66 66"><circle cx="33" cy="33" r="27" fill="none" stroke="#9a9a9a" strokeWidth="12" /><circle cx="33" cy="33" r="26" fill="none" stroke="#fff" strokeWidth="7" /></svg>
          <SearchText>Type here to search</SearchText>
          <Mic>
            <svg width="24" height="40" viewBox="0 0 24 40"><rect x="6" y="1" width="12" height="26" rx="6" fill="none" stroke="#9a9a9a" strokeWidth="2.500" /><path d="M1 18c0 16 22 16 22 0M12 31v8" fill="none" stroke="#9a9a9a" strokeWidth="2.500" /></svg>
          </Mic>
        </SearchBox>
        <TaskView>
          <svg width="40" height="40" viewBox="0 0 40 40" fill="none" stroke="#fff" strokeWidth="2"><path d="M1 8V2M27 2v6M1 8h26M1 12h26v16H1zM1 32h26M1 32v7M27 32v7M37 1v15M37 24v15" /><circle cx="37" cy="20" r="2.500" fill="#fff" /></svg>
        </TaskView>
        {taskItems.map(([k, u]) => (
          <TaskItem key={k} $active={u === 3}>
            {k === "eclipse" ? <EclipseLogo /> : logos[k]}
            {u > 0 && <Underline $full={u === 3} $split={u === 2} />}
          </TaskItem>
        ))}
        <TrayItem $w={80}>
          <svg width="50" height="48" viewBox="0 0 50 48"><circle cx="21" cy="22" r="19" fill="#fff" stroke="#0f8fd0" strokeWidth="4" /><text x="21" y="33" fontSize="30" fontWeight="700" fill="#0f8fd0" textAnchor="middle" fontFamily="Liberation Sans">?</text><circle cx="37" cy="33" r="13" fill="#0f8fd0" /><text x="37" y="42" fontSize="24" fontWeight="700" fill="#fff" textAnchor="middle" fontFamily="Liberation Serif">i</text></svg>
        </TrayItem>
        <TrayItem $w={112}>
          <svg width="36" height="40" viewBox="0 0 36 40" fill="none" stroke="#fff" strokeWidth="2.500"><ellipse cx="25" cy="10" rx="6" ry="8" /><path d="M20 17c-2 2-3 5-3 6M30 17c3 2 5 6 5 9" /><ellipse cx="11" cy="23" rx="6" ry="7" /><path d="M6 29c-3 2-4 6-4 10M16 29c3 2 4 6 4 10" /></svg>
        </TrayItem>
        <TrayItem $w={84}><svg width="30" height="18" viewBox="0 0 30 18"><path d="M1 17 15 1l14 16" fill="none" stroke="#fff" strokeWidth="1.800" /></svg></TrayItem>
        <TrayItem $w={74}>
          <svg width="40" height="36" viewBox="0 0 40 36"><circle cx="23" cy="12" r="11" fill="#8a8e92" /><path d="M4 26c-4-8 2-16 10-14 4 0 8 4 8 14z" fill="#d8dadc" /><circle cx="27" cy="24" r="11" fill="#fff" stroke="#1a6fd0" strokeWidth="2" /><path d="M21 24a6 6 0 0 1 11-3M33 24a6 6 0 0 1-11 3" fill="none" stroke="#1a6fd0" strokeWidth="2" /></svg>
        </TrayItem>
        <TrayItem $w={86}>
          <svg width="42" height="36" viewBox="0 0 42 36" fill="none" stroke="#fff" strokeWidth="3"><path d="M3 0v7M10 0v7M1 7h11v8c0 4-3 5-5 5s-5-1-5-5zM7 20v14" /><path d="M16 10h22v23H12" /><path d="M38 16h3v9h-3" /><path d="M18 20h12v10H15z" fill="#fff" stroke="none" /></svg>
        </TrayItem>
        <TrayItem $w={84}>
          <svg width="32" height="48" viewBox="0 0 32 48" fill="none" stroke="#fff" strokeWidth="2"><path d="M2 45C2 22 14 5 30 3M12 45C12 30 20 17 30 15M21 45c0-9 4-15 9-18" /><circle cx="29" cy="41" r="3.500" fill="#fff" stroke="none" /></svg>
        </TrayItem>
        <TrayItem $w={66}>
          <svg width="42" height="60" viewBox="0 0 42 60" fill="none" stroke="#fff" strokeWidth="2"><path d="M1 22h6l8-7v31l-8-7H1z" /><path d="M21 22c4 5 4 12 0 17M28 16c5 9 5 20 0 28" /><path d="M35 4c7 16 7 36 0 52" stroke="#6a7078" /></svg>
        </TrayItem>
        <TrayItem $w={94}>
          <svg width="40" height="38" viewBox="0 0 40 38" fill="#fff"><path d="M10 0 19 7 10 14 1 7zM30 0l9 7-9 7-9-7zM10 14l9 7-9 7-9-7zM30 14l9 7-9 7-9-7zM20 24l9 7-9 7-9-7z" /></svg>
        </TrayItem>
        <TrayItem $w={86}>
          <svg width="42" height="46" viewBox="0 0 42 46" fill="none" stroke="#fff" strokeWidth="2.500"><path d="M26 5c2-4 8-1 6 3L17 40l-7 4 0-8z" /><path d="M13 28c-8 0-12 8-10 12s8 5 12 3M31 15c5-1 9 2 8 6-1 3-6 4-10 4" /></svg>
        </TrayItem>
        <TrayItem $w={108}>ENG</TrayItem>
        <Clock><span>12:47 PM</span><span>4/27/2020</span></Clock>
        <TrayItem $w={128}>
          <svg width="64" height="68" viewBox="0 0 64 68"><path d="M3 0h41v56H3z" fill="#fff" /><path d="M11 14h24M11 25h24M11 36h18" stroke="#111" strokeWidth="3" /><circle cx="40" cy="46" r="20" fill="#3a3a3a" stroke="#9a9a9a" strokeWidth="1.500" /><text x="40" y="58" fontSize="32" fill="#fff" textAnchor="middle" fontFamily="Liberation Sans">1</text></svg>
        </TrayItem>
        <Edge />
      </Taskbar>
      <Annotation width="3840" height="2160" viewBox="0 0 3840 2160">
        <Smooth pts={[[258,742],[321,748],[429,750],[469,737],[509,723],[596,723],[670,730],[717,747],[717,763],[670,787],[603,803],[502,800],[402,788],[335,783],[268,787],[214,797],[147,800],[100,790],[74,770],[87,755],[114,753],[161,747],[201,733],[241,733],[258,742]]} />
        <Smooth pts={[[660,787],[690,810],[804,827],[871,840],[971,844],[1015,844]]} />
        <Smooth pts={[[663,787],[690,860],[700,917],[707,1000],[715,1052]]} />
        <Smooth pts={[[670,793],[710,840],[737,883],[779,906],[804,950],[882,1029],[980,1151],[1053,1322],[1151,1445],[1244,1543],[1251,1567]]} />
      </Annotation>
    </App0>
  );
}
